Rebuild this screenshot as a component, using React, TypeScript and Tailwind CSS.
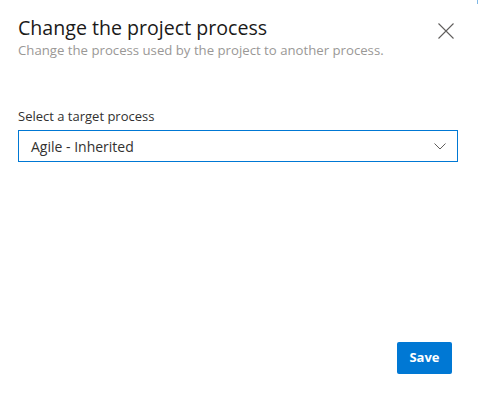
import React from "react";

export default function App() {
  return (
    <div
      className="relative flex h-[396px] w-[478px] flex-col bg-white text-[#323130]"
      style={{ fontFamily: '"Segoe UI", "Open Sans", "Noto Sans", sans-serif' }}
    >
      <div className="absolute right-0 top-0 h-[4px] w-[1px] bg-[#7fb8e6]" />
      <div className="flex items-start justify-between pl-[18px] pr-[24px] pt-[14px]">
        <div className="flex flex-col">
          <h1 className="text-[19.6px] font-medium leading-[28px] text-[#1b1a19]">Change the project process</h1>
          <p className="mt-[-1px] text-[13.2px] leading-[18px] text-[#9a9896]">
            Change the process used by the project to another process.
          </p>
        </div>
        <button className="mt-[9px] flex h-[16px] w-[16px] items-center justify-center text-[#605e5c]">
          <svg width="16" height="16" viewBox="0 0 16 16" fill="none" stroke="currentColor" strokeWidth="1.1">
            <path d="M0.5 0.5L15.5 15.5M15.5 0.5L0.5 15.5" />
          </svg>
        </button>
      </div>
      <div className="mt-[48px] flex flex-col pl-[18px] pr-[20px]">
        <label className="text-[13px] leading-[18px] text-[#323130]">Select a target process</label>
        <div className="mt-[5px] flex h-[32px] items-center justify-between border border-[#0078d4] pl-[12px] pr-[11px]">
          <span className="text-[14px] text-[#323130]">Agile - Inherited</span>
          <svg width="12" height="7" viewBox="0 0 12 7" fill="none" stroke="#605e5c" strokeWidth="1">
            <path d="M0.5 0.5L6 6L11.5 0.5" />
          </svg>
        </div>
      </div>
      <div className="mt-auto flex justify-end pb-[22px] pr-[26px]">
        <button className="flex h-[32px] w-[55px] items-center justify-center rounded-[2px] bg-[#0078d4] text-[13px] font-bold text-white">
          Save
        </button>
      </div>
    </div>
  );
}
